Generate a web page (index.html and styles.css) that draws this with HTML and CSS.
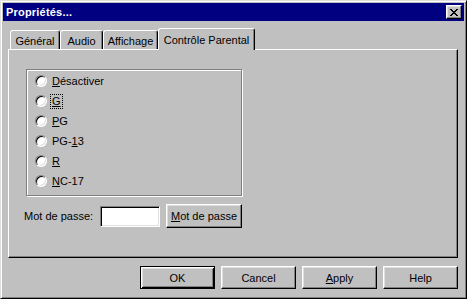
FILE: index.html
```html
<!DOCTYPE html>
<html lang="fr">
<head>
<meta charset="utf-8">
<title>Propriétés</title>
<link rel="stylesheet" href="styles.css">
</head>
<body>
<div class="window">
  <div class="titlebar">
    <span class="title">Propriétés...</span>
    <span class="close"><svg width="8" height="7" viewBox="0 0 8 7"><path d="M0 0h2v1h-2zM6 0h2v1h-2zM1 1h2v1h-2zM5 1h2v1h-2zM2 2h4v1h-4zM3 3h2v1h-2zM2 4h4v1h-4zM1 5h2v1h-2zM5 5h2v1h-2zM0 6h2v1h-2zM6 6h2v1h-2z" fill="#000"/></svg></span>
  </div>
  <div class="content">
    <div class="tabs">
      <div class="tab tab-general">Général</div>
      <div class="tab tab-audio">Audio</div>
      <div class="tab tab-affichage">Affichage</div>
      <div class="tab tab-active">Contrôle Parental</div>
    </div>
    <div class="panel">
      <div class="group">
        <div class="radio-row"><span class="radio"></span><span class="lbl"><u>D</u>ésactiver</span></div>
        <div class="radio-row"><span class="radio"></span><span class="lbl focus"><u>G</u></span></div>
        <div class="radio-row"><span class="radio"></span><span class="lbl"><u>P</u>G</span></div>
        <div class="radio-row"><span class="radio"></span><span class="lbl">PG-<u>1</u>3</span></div>
        <div class="radio-row"><span class="radio"></span><span class="lbl"><u>R</u></span></div>
        <div class="radio-row"><span class="radio"></span><span class="lbl"><u>N</u>C-17</span></div>
      </div>
      <div class="pw-row">
        <span class="pw-label">Mot de passe:</span>
        <span class="input"></span>
        <span class="btn btn-pw"><u>M</u>ot de passe</span>
      </div>
    </div>
    <div class="buttons">
      <span class="btn btn-default">OK</span>
      <span class="btn">Cancel</span>
      <span class="btn"><u>A</u>pply</span>
      <span class="btn">Help</span>
    </div>
  </div>
</div>
</body>
</html>
```

FILE: styles.css
```css
* { box-sizing: border-box; }
html, body { margin: 0; padding: 0; background: #c0c0c0; }
body {
  font-family: "Liberation Sans", Arial, sans-serif;
  font-size: 11px;
  color: #000;
}
u { text-decoration: underline; text-underline-offset: 1px; }

.window {
  width: 467px;
  height: 299px;
  background: #c0c0c0;
  border: 1px solid;
  border-color: #dfdfdf #000 #000 #dfdfdf;
  box-shadow: inset 1px 1px #fff, inset -1px -1px #808080;
  padding: 2px;
  display: flex;
  flex-direction: column;
}

.titlebar {
  height: 18px;
  background: #000080;
  display: flex;
  align-items: center;
  justify-content: space-between;
  padding: 0 2px 0 3px;
}
.title {
  color: #fff;
  font-weight: bold;
  font-size: 11px;
  letter-spacing: 0.2px;
}
.close {
  width: 16px;
  height: 14px;
  background: #c0c0c0;
  border: 1px solid;
  border-color: #fff #000 #000 #fff;
  box-shadow: inset -1px -1px #808080, inset 1px 1px #dfdfdf;
  display: flex;
  align-items: center;
  justify-content: center;
}

.content {
  flex: 1;
  padding: 7px 6px 0 5px;
  display: flex;
  flex-direction: column;
}

.tabs {
  height: 21px;
  display: flex;
  align-items: flex-end;
  padding-left: 2px;
}
.tab {
  height: 19px;
  border: 1px solid;
  border-bottom: none;
  border-color: #fff #000 transparent #fff;
  border-radius: 3px 3px 0 0;
  box-shadow: inset -1px 0 #808080;
  display: flex;
  align-items: center;
  justify-content: center;
  padding-top: 1px;
  white-space: nowrap;
}
.tab-general { width: 50px; }
.tab-audio { width: 43px; }
.tab-affichage { width: 55px; }
.tab-active {
  width: 97px;
  height: 22px;
  margin-bottom: -1px;
  position: relative;
  z-index: 1;
  background: #c0c0c0;
  padding-bottom: 1px;
}

.panel {
  height: 209px;
  width: 450px;
  border: 1px solid;
  border-color: #fff #000 #000 #fff;
  box-shadow: inset -1px -1px #808080;
  padding: 19px 0 0 17px;
}

.group {
  width: 216px;
  height: 127px;
  border: 1px solid #808080;
  box-shadow: inset 1px 1px #fff, 1px 1px #fff;
  padding: 1px 0 0 8px;
}
.radio-row {
  height: 20px;
  display: flex;
  align-items: center;
}
.radio {
  width: 12px;
  height: 12px;
  border-radius: 50%;
  background: #fff;
  border: 1px solid;
  border-color: #808080 #fff #fff #808080;
  box-shadow: inset 1px 1px #000, inset -1px -1px #dfdfdf;
  margin-right: 5px;
  flex: none;
}
.lbl { line-height: 13px; }
.focus {
  outline: 1px dotted #000;
  padding: 0 1px;
  margin-left: -1px;
}

.pw-row {
  display: flex;
  align-items: center;
  margin: 8px 0 0 -2px;
}
.pw-label { width: 76px; }
.input {
  width: 60px;
  height: 21px;
  background: #fff;
  border: 1px solid;
  border-color: #808080 #fff #fff #808080;
  box-shadow: inset 1px 1px #000, inset -1px -1px #dfdfdf;
}

.btn {
  width: 75px;
  height: 23px;
  border: 1px solid;
  border-color: #fff #000 #000 #fff;
  box-shadow: inset -1px -1px #808080, inset 1px 1px #dfdfdf;
  display: flex;
  align-items: center;
  justify-content: center;
  background: #c0c0c0;
}
.btn-pw {
  width: 76px;
  height: 24px;
  margin-left: 6px;
}
.btn-default {
  border-color: #000;
  box-shadow: inset 1px 1px #fff, inset -1px -1px #000, inset 2px 2px #dfdfdf, inset -2px -2px #808080;
}

.buttons {
  display: flex;
  justify-content: flex-end;
  gap: 6px;
  margin-top: 8px;
  padding-right: 0;
}
```
